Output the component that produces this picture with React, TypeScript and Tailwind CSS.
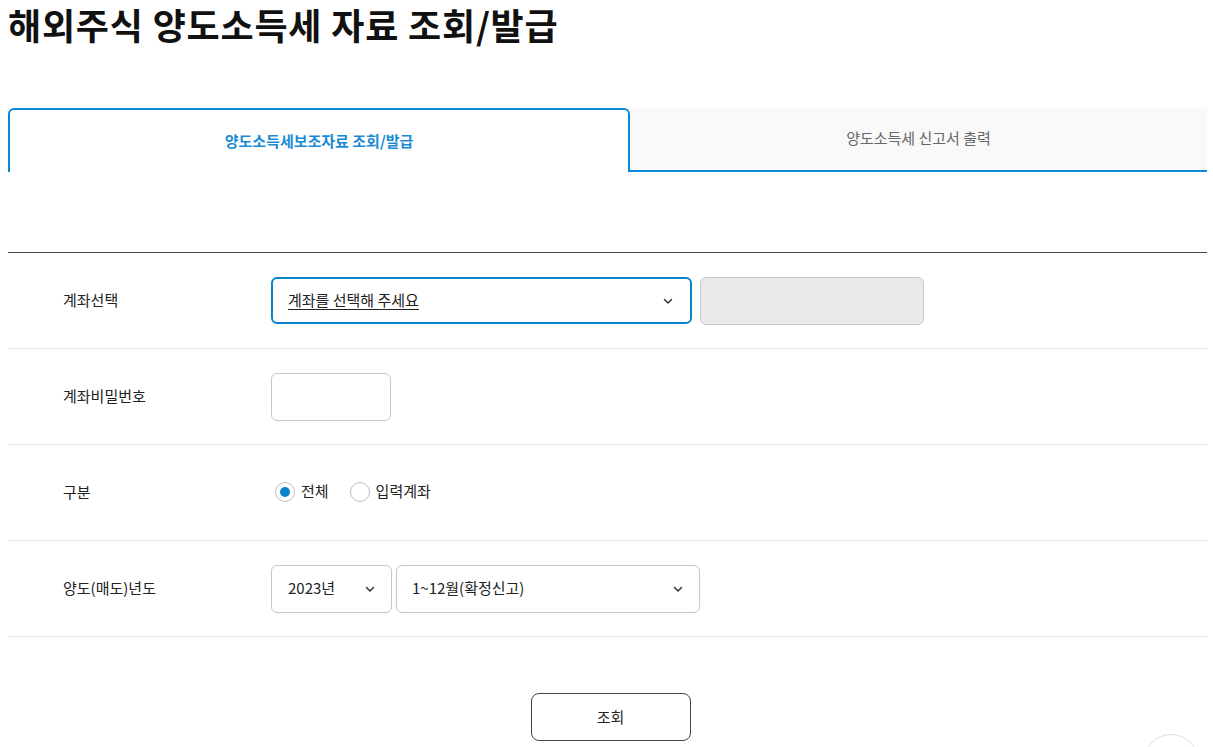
import { useState } from 'react'

function Chevron() {
  return (
    <svg width="12" height="12" viewBox="0 0 12 12" fill="none" className="shrink-0">
      <path d="M2.5 4.5L6 8l3.5-3.5" stroke="#333" strokeWidth="1.5" strokeLinecap="round" strokeLinejoin="round" />
    </svg>
  )
}

function Row({ label, children }: { label: string; children: React.ReactNode }) {
  return (
    <div className="flex h-[96px] items-center border-b border-[#e3e3e3]">
      <div className="w-[263px] shrink-0 pl-[55px] text-[15px] text-[#222]">{label}</div>
      <div className="flex items-center gap-2">{children}</div>
    </div>
  )
}

export default function App() {
  const [kind, setKind] = useState('all')

  return (
    <div
      className="relative h-[747px] overflow-hidden bg-white pl-2 pr-[6px] text-[#222]"
      style={{ fontFamily: '"Noto Sans CJK KR", "Noto Sans", sans-serif' }}
    >
      <h1 className="pt-[1px] text-[36px] font-bold leading-[46px] tracking-[0.8px] text-[#111]">
        해외주식 양도소득세 자료 조회/발급
      </h1>

      {/* tabs */}
      <div className="mt-[61px] flex h-[64px]">
        <button className="flex w-[622px] items-center justify-center rounded-t-[6px] border-2 border-b-0 border-[#0a8ad6] bg-white text-[15px] font-semibold text-[#1a8ad4]">
          양도소득세보조자료 조회/발급
        </button>
        <button className="flex flex-1 items-center justify-center border-b-2 border-[#0a8ad6] bg-[#f9f9f9] pb-[2px] text-[15px] text-[#666]">
          양도소득세 신고서 출력
        </button>
      </div>

      <div className="mt-[80px] border-t border-[#444]">
        <Row label="계좌선택">
          <div className="flex h-[47px] w-[421px] items-center justify-between rounded-[6px] border-2 border-[#0a84c8] pl-[15px] pr-[16px]">
            <span className="text-[15px] text-[#222] underline underline-offset-[3px]">계좌를 선택해 주세요</span>
            <Chevron />
          </div>
          <div className="h-[48px] w-[224px] rounded-[6px] border border-[#c8c8cc] bg-[#e9e9eb]" />
        </Row>

        <Row label="계좌비밀번호">
          <input
            type="password"
            className="h-[48px] w-[120px] rounded-[6px] border border-[#c8c8cc] bg-white px-3 outline-none"
          />
        </Row>

        <Row label="구분">
          <div className="-mt-[2px] flex items-center gap-[21px] pl-[4px] text-[15px]">
            <label className="flex cursor-pointer items-center gap-[6px]" onClick={() => setKind('all')}>
              <span className="flex h-[20px] w-[20px] items-center justify-center rounded-full border border-[#bdbdbd] bg-white">
                {kind === 'all' && <span className="h-[10px] w-[10px] rounded-full bg-[#0a84c8]" />}
              </span>
              <span>전체</span>
            </label>
            <label className="flex cursor-pointer items-center gap-[6px]" onClick={() => setKind('input')}>
              <span className="flex h-[20px] w-[20px] items-center justify-center rounded-full border border-[#bdbdbd] bg-white">
                {kind === 'input' && <span className="h-[10px] w-[10px] rounded-full bg-[#0a84c8]" />}
              </span>
              <span>입력계좌</span>
            </label>
          </div>
        </Row>

        <Row label="양도(매도)년도">
          <div className="-mr-[4px] flex items-center gap-[4px]">
            <div className="flex h-[48px] w-[121px] items-center justify-between rounded-[6px] border border-[#c8c8cc] pl-[16px] pr-[15px] text-[15px]">
              <span>2023년</span>
              <Chevron />
            </div>
            <div className="flex h-[48px] w-[304px] items-center justify-between rounded-[6px] border border-[#c8c8cc] pl-[15px] pr-[15px] text-[15px]">
              <span>1~12월(확정신고)</span>
              <Chevron />
            </div>
          </div>
        </Row>
      </div>

      <div className="mt-[56px] flex justify-center pl-[6px]">
        <button className="h-[48px] w-[160px] rounded-[8px] border border-[#444] bg-white text-[15px] text-[#222]">
          조회
        </button>
      </div>

      {/* floating top button */}
      <div className="absolute left-[1143px] top-[734px] h-[56px] w-[56px] rounded-full border border-[#ddd] bg-white" />
    </div>
  )
}
